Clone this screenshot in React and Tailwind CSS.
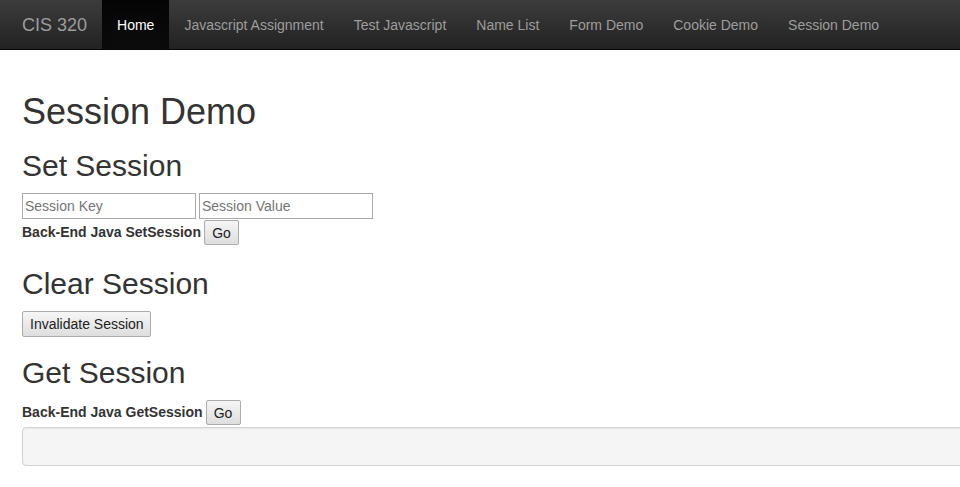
export default function App() {
  const nav = [
    "Javascript Assignment",
    "Test Javascript",
    "Name List",
    "Form Demo",
    "Cookie Demo",
    "Session Demo",
  ];
  const btn =
    "h-[25px] px-[7px] whitespace-nowrap border border-[#ababab] rounded-[2px] bg-[linear-gradient(to_bottom,#f6f6f6,#dedede)] text-[14px] leading-[16px] text-[#222] font-['Liberation_Sans',Arial,sans-serif]";
  const input =
    "w-[174px] h-[26px] border border-[#a9a9a9] px-[2px] text-[14px] text-[#333] placeholder:text-[#757575] outline-none font-['Liberation_Sans',Arial,sans-serif]";
  return (
    <div className="min-h-[487px] w-full overflow-hidden bg-white text-[14px] text-[#333] font-['Liberation_Sans',Arial,sans-serif]">
      <nav className="box-border flex h-[50px] border-b border-[#080808] bg-[linear-gradient(to_bottom,#3c3c3c,#222222)] pl-[7px]">
        <a className="flex h-full items-center px-[15px] text-[18px] leading-[20px] text-[#9d9d9d]">
          CIS 320
        </a>
        <a className="flex h-full items-center px-[15px] leading-[20px] text-white bg-[linear-gradient(to_bottom,#050505,#0c0c0c)] shadow-[inset_0_3px_9px_rgba(0,0,0,0.25)]">
          Home
        </a>
        {nav.map((n) => (
          <a
            key={n}
            className="flex h-full items-center px-[15px] leading-[20px] text-[#9d9d9d]"
          >
            {n}
          </a>
        ))}
      </nav>

      <div className="flex flex-col items-start pl-[22px]">
        <h1 className="mt-[42px] text-[36px] leading-[40px] font-normal">
          Session Demo
        </h1>
        <h2 className="mt-[17px] text-[30px] leading-[33px] font-normal">
          Set Session
        </h2>
        <div className="mt-[11px] flex gap-[3px]">
          <input className={input} placeholder="Session Key" />
          <input className={input} placeholder="Session Value" />
        </div>
        <div className="mt-[1px] flex items-center gap-[3px]">
          <span className="font-bold">Back-End Java SetSession</span>
          <button className={btn + " w-[35px]"}>Go</button>
        </div>

        <h2 className="mt-[22px] text-[30px] leading-[33px] font-normal">
          Clear Session
        </h2>
        <button className={btn + " mt-[11px] h-[26px] w-[129px]"}>
          Invalidate Session
        </button>

        <h2 className="mt-[19px] text-[30px] leading-[33px] font-normal">
          Get Session
        </h2>
        <div className="mt-[11px] flex items-center gap-[3px]">
          <span className="font-bold">Back-End Java GetSession</span>
          <button className={btn + " w-[35px]"}>Go</button>
        </div>
        <div className="mt-[2px] h-[39px] w-[1000px] rounded-[4px] border border-[#d3d3d3] bg-[#f5f5f5] shadow-[inset_0_1px_2px_rgba(0,0,0,0.06)]"></div>
      </div>
    </div>
  );
}
